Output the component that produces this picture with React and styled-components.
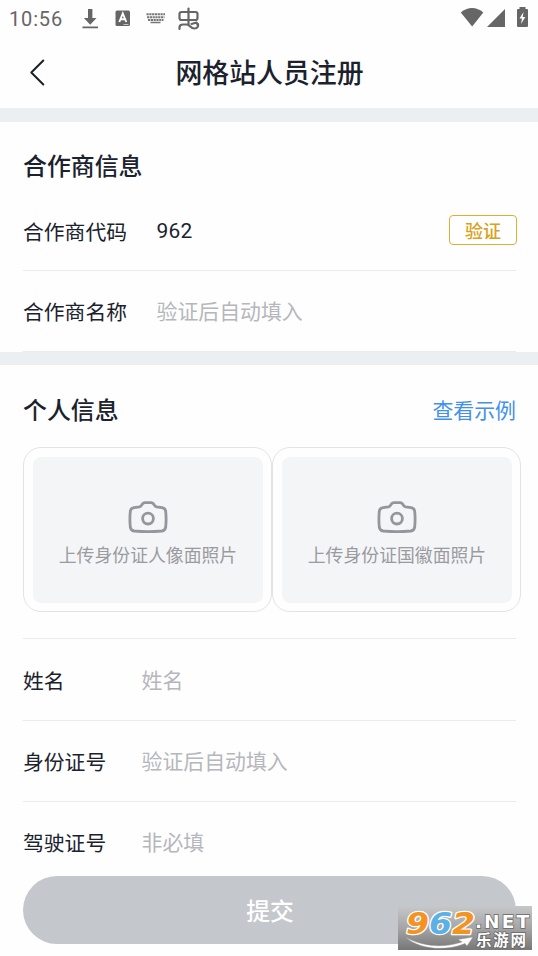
import React from "react";
import styled, { createGlobalStyle } from "styled-components";

const GlobalStyle = createGlobalStyle`
  * { box-sizing: border-box; }
  body { margin: 0; background: #fff; overflow: hidden; }
  button, input { font: inherit; }
`;

const Screen = styled.div`
  width: 538px;
  height: 956px;
  position: relative;
  overflow: hidden;
  display: flex;
  flex-direction: column;
  background: #fefefe;
  color: #1b222d;
  font-family: Roboto, "Noto Sans CJK SC", sans-serif;
`;

const StatusBar = styled.div`
  height: 38px;
  flex: none;
  display: flex;
  justify-content: space-between;
  color: #666;
`;

const Clock = styled.span`
  width: 72px;
  padding-left: 9px;
  font-size: 20px;
  line-height: 38px;
  letter-spacing: 0.85px;
`;

const StatusGroup = styled.div`
  display: flex;
`;

const Header = styled.header`
  height: 70px;
  flex: none;
  display: grid;
  grid-template-columns: 76px 1fr 76px;
  align-items: center;
`;

const BackButton = styled.button`
  height: 70px;
  padding: 0;
  border: 0;
  background: none;
  color: #1b222d;
`;

const Title = styled.h1`
  margin: 0;
  padding: 1px 0 0 1px;
  font-size: 26.9px;
  line-height: 70px;
  font-weight: 500;
  text-align: center;
`;

const Band = styled.div`
  height: ${(p) => p.$height}px;
  flex: none;
  background: #ebeff2;
`;

const Section = styled.section`
  padding: 0 22px 0 23px;
  display: flex;
  flex-direction: column;
`;

const SectionHead = styled.div`
  height: ${(p) => p.$height}px;
  padding-top: ${(p) => p.$top}px;
  display: flex;
  justify-content: space-between;
`;

const SectionTitle = styled.h2`
  margin: 0;
  font-size: 23.9px;
  line-height: 36px;
  font-weight: 500;
`;

const ExampleLink = styled.a`
  font-size: 20.9px;
  line-height: 37px;
  color: #4390ec;
`;

const Row = styled.div`
  height: ${(p) => p.$height}px;
  display: flex;
  align-items: center;
  border-bottom: ${(p) => (p.$last ? "0" : "1px solid #e9ebed")};
`;

const Label = styled.span`
  width: ${(p) => p.$width}px;
  flex: none;
  padding-top: 4px;
  font-size: 20.8px;
  line-height: 32px;
`;

const Value = styled.span`
  flex: 1;
  font-size: 20.9px;
  line-height: 32px;
  padding: ${(p) => (p.$filled ? "0" : "2px")} 0 0 0.5px;
  letter-spacing: ${(p) => (p.$filled ? "0.2px" : "0")};
  color: ${(p) => (p.$filled ? "#1b222d" : "#b5b7bc")};
`;

const VerifyButton = styled.button`
  width: 68px;
  height: 30px;
  margin: 0 -1px 2px 0;
  padding: 2px 0 0;
  border: 1px solid #e3ad35;
  border-radius: 4px;
  background: #fff;
  color: #d9a11c;
  font-size: 18px;
  line-height: 28px;
  font-weight: 500;
`;

const UploadRow = styled.div`
  height: 191px;
  margin-right: -5px;
  display: flex;
  align-items: flex-start;
`;

const UploadCard = styled.div`
  width: 249px;
  height: 165px;
  flex: none;
  padding: 9px 8px 9px 9px;
  border: 1px solid #e2e3e5;
  border-radius: 18px;
`;

const UploadArea = styled.div`
  height: 146px;
  border-radius: 8px;
  background: #f4f5f7;
  display: flex;
  flex-direction: column;
  align-items: center;
  padding-top: 44px;
  color: #94969c;
`;

const UploadText = styled.span`
  margin-top: 9px;
  font-size: 17.85px;
  line-height: 28px;
  white-space: nowrap;
  color: #999b9f;
`;

const TopRule = styled.div`
  height: 1px;
  background: #e9ebed;
`;

const SubmitButton = styled.button`
  position: absolute;
  left: 23px;
  top: 876px;
  width: 493px;
  height: 68px;
  padding: 0 0 2px 1px;
  border: 0;
  border-radius: 34px;
  background: #c4c7cc;
  color: #fff;
  font-size: 23.8px;
  font-weight: 500;
`;

const Watermark = styled.svg`
  position: absolute;
  left: 398px;
  top: 906px;
`;

const LeftIcons = () => (
  <svg width="138" height="38" viewBox="72 0 138 38" fill="#666">
    <path d="M88 9h4.400v9h4.100l-6.300 6.800-6.300-6.800H88zM82.500 26.500h15.500v1.800h-15.500z" />
    <rect x="115.500" y="10.500" width="14.500" height="15.500" rx="1.500" />
    <path d="M119.300 22l3.500-8.500 3.500 8.500M120.500 19.300h4.600" fill="none" stroke="#fff" strokeWidth="1.900" />
    <path d="M123.500 24.500h5" stroke="#ddd" strokeWidth=".8" />
    <path d="M146.500 14.300h18.500M147 17.200h17.500M148 20h15.500" fill="none" stroke="#777" strokeWidth="1.900" strokeDasharray="2.200 .6" />
    <path d="M150.500 22.500h10" stroke="#777" strokeWidth="1.500" />
    <g fill="none" stroke="#666" strokeWidth="2.200" strokeLinecap="round" strokeLinejoin="round">
      <rect x="179.500" y="12" width="18" height="8" rx="2" />
      <path d="M188.500 8.500v16.500M179.500 29v-1.500q0-3 3.500-3h3.500c4 0 3.500 4 8 4 3 0 4-2 3.500-4.500M191.500 24l5-1.500 1.500 3" />
    </g>
  </svg>
);

const RightIcons = () => (
  <svg width="82" height="38" viewBox="456 0 82 38" fill="#666">
    <path d="M460.800 12.500c6.500-6 16-6 22.500 0L472.200 26.500z" />
    <path d="M505 9v18h-18z" />
    <path d="M519.500 9v-2h6v2h1.500q1 0 1 1v16q0 1-1 1h-9q-1 0-1-1V10q0-1 1-1z" />
    <path d="M523.500 12l-4 6.500h2.500l-1 5.500 4.300-7h-2.600z" fill="#fff" />
  </svg>
);

const CameraIcon = () => (
  <svg width="40" height="32" viewBox="0 0 40 32" fill="none" stroke="currentColor" strokeWidth="2.800" strokeLinejoin="round">
    <path d="M11.500 5.800C13.300 5.300 13.700 4 14.700 2.600Q15.400 1.600 16.800 1.600H23.200Q24.600 1.600 25.300 2.600C26.300 4 26.700 5.300 28.500 5.800L34 6.600Q37.300 7.100 37.700 10.300Q38.500 18 37.700 26Q37.300 29.500 33.800 30Q20 31.500 6.200 30Q2.700 29.500 2.300 26Q1.500 18 2.300 10.300Q2.700 7.100 6 6.600Z" />
    <circle cx="20" cy="17.600" r="5.400" />
  </svg>
);

const Upload = ({ text }) => (
  <UploadCard>
    <UploadArea>
      <CameraIcon />
      <UploadText>{text}</UploadText>
    </UploadArea>
  </UploadCard>
);

const Field = ({ label, value, filled, height, labelWidth, last, children }) => (
  <Row $height={height} $last={last}>
    <Label $width={labelWidth}>{label}</Label>
    <Value $filled={filled}>{value}</Value>
    {children}
  </Row>
);

const SiteMark = () => (
  <Watermark width="134" height="44" viewBox="0 0 134 44">
    <defs>
      <linearGradient id="plate" x1="0" y1="0" x2="0" y2="1">
        <stop offset="0" stopColor="#c6c7c9" />
        <stop offset=".5" stopColor="#a5a5a6" />
        <stop offset="1" stopColor="#777" />
      </linearGradient>
    </defs>
    <rect width="134" height="44" fill="url(#plate)" />
    <g fontFamily="DejaVu Sans" fontWeight="700" fontStyle="italic" fontSize="30" stroke="#fff" strokeWidth="2.600" paintOrder="stroke" strokeLinejoin="round">
      <text x="8" y="27.500" fill="#f49222" textLength="23" lengthAdjust="spacingAndGlyphs">9</text>
      <text x="31" y="27.500" fill="#5cb0e5" textLength="23" lengthAdjust="spacingAndGlyphs">6</text>
      <text x="54" y="27.500" fill="#f49222" textLength="23" lengthAdjust="spacingAndGlyphs">2</text>
    </g>
    <path d="M7 31C25 41 46 42 64 36l-4-2.500 15-2.500-6 9-2-2.500C46 46 21 43 7 31z" fill="#fff" stroke="#888" strokeWidth=".4" />
    <g fill="#fff" stroke="#666" strokeWidth="1.500" paintOrder="stroke" fontWeight="700">
      <text x="77" y="22" fontFamily="DejaVu Sans" fontSize="18.500" textLength="54" lengthAdjust="spacing">.NET</text>
      <text x="78" y="39.500" fontFamily="Noto Sans CJK SC" fontSize="15.500" textLength="50">乐游网</text>
    </g>
  </Watermark>
);

export default function App() {
  return (
    <>
      <GlobalStyle />
      <Screen lang="zh-CN">
        <StatusBar>
          <StatusGroup>
            <Clock>10:56</Clock>
            <LeftIcons />
          </StatusGroup>
          <RightIcons />
        </StatusBar>
        <Header>
          <BackButton aria-label="返回">
            <svg width="76" height="70" viewBox="0 0 76 70" fill="none" stroke="currentColor" strokeWidth="2" strokeLinecap="round" strokeLinejoin="round">
              <path d="M43.300 21.500L31.300 33.500L43.300 45.500" />
            </svg>
          </BackButton>
          <Title>网格站人员注册</Title>
        </Header>
        <Band $height={13.5} />
        <Section>
          <SectionHead $height={69.5} $top={27}>
            <SectionTitle>合作商信息</SectionTitle>
          </SectionHead>
          <Field label="合作商代码" value="962" filled height={80} labelWidth={133}>
            <VerifyButton>验证</VerifyButton>
          </Field>
          <Field label="合作商名称" value="验证后自动填入" height={81} labelWidth={133} />
        </Section>
        <Band $height={12.5} />
        <Section>
          <SectionHead $height={82.5} $top={28}>
            <SectionTitle>个人信息</SectionTitle>
            <ExampleLink>查看示例</ExampleLink>
          </SectionHead>
          <UploadRow>
            <Upload text="上传身份证人像面照片" />
            <Upload text="上传身份证国徽面照片" />
          </UploadRow>
          <TopRule />
          <Field label="姓名" value="姓名" height={82} labelWidth={118} />
          <Field label="身份证号" value="验证后自动填入" height={81} labelWidth={118} />
          <Field label="驾驶证号" value="非必填" height={79} labelWidth={118} last />
        </Section>
        <SubmitButton>提交</SubmitButton>
        <SiteMark />
      </Screen>
    </>
  );
}
